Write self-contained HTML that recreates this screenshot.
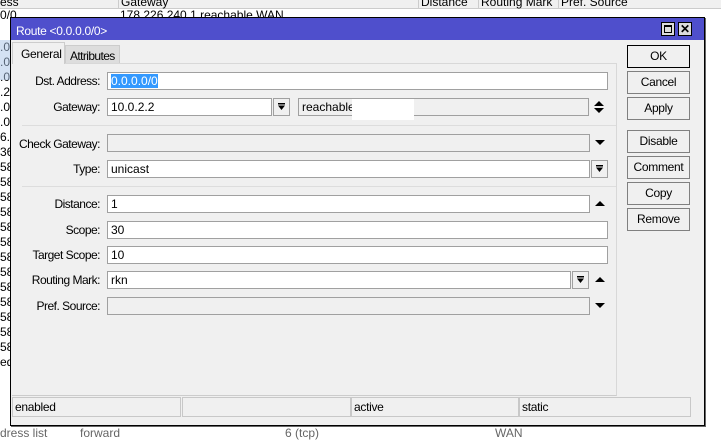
<!DOCTYPE html>
<html><head><style>
*{box-sizing:border-box;margin:0;padding:0}
body{width:721px;height:437px;overflow:hidden;background:#fff;font-family:"Liberation Sans",sans-serif;font-size:11px;color:#000;position:relative}
.a{position:absolute}
.in{position:absolute;height:18px;border:1px solid #a0a0a0;background:#fff;padding:2px 3px;font-size:12px;line-height:12px}
.g{background:#f0f0f0}
.lb{position:absolute;right:621px;font-size:12px;text-align:right;white-space:nowrap;letter-spacing:-0.5px}
.btn{position:absolute;left:627px;width:63px;height:23px;border:1px solid #808080;background:#f0f0f0;text-align:center;line-height:21px;font-size:12px;letter-spacing:-0.3px}
.dd{position:absolute;width:17px;height:18px;border:1px solid #a0a0a0;background:#f0f0f0}
.dd svg{position:absolute;left:4px;top:4px}
.tri{position:absolute}
.cell{position:absolute;top:397px;height:20px;border:1px solid #c8c8c8;font-size:12px;line-height:18px;padding-left:2px;letter-spacing:-0.3px}
</style></head><body>
<div class="a" style="left:0;top:0;width:721px;height:9px;background:#f0f0f0;border-bottom:1px solid #ccc"></div>
<div class="a" style="left:0;top:-5px;font-size:12px">ess</div>
<div class="a" style="left:118px;top:-5px;font-size:12px;border-left:1px solid #ccc;padding-left:2px">Gateway</div>
<div class="a" style="left:418px;top:-5px;font-size:12px;border-left:1px solid #ccc;padding-left:2px">Distance</div>
<div class="a" style="left:478px;top:-5px;font-size:12px;border-left:1px solid #ccc;padding-left:2px">Routing Mark</div>
<div class="a" style="left:558px;top:-5px;font-size:12px;border-left:1px solid #ccc;padding-left:2px">Pref. Source</div>
<div class="a" style="left:120px;top:8px;font-size:12px">178.226.240.1 reachable WAN</div>
<div class="a" style="left:0;top:8px;font-size:12px">0/0</div>
<div class="a" style="left:0;top:40px;width:10px;height:385px;background:#fff;font-size:12px;line-height:15px;overflow:hidden">.0<br>.0<br>.0<br>.2<br>.0<br>.0<br>6.<br>36<br>58<br>58<br>58<br>58<br>58<br>58<br>58<br>58<br>58<br>58<br>58<br>58<br>58<br>ed</div>
<div class="a" style="left:0;top:40px;width:10px;height:40px;background:#a8c4e8;opacity:.5"></div>
<div class="a" style="left:705px;top:20px;width:16px;height:405px;background:#fff;border-left:1px solid #ddd"></div>
<div class="a" style="left:0;top:427px;width:721px;height:10px;font-size:12px;color:#666;line-height:12px">
<span class="a" style="left:0">dress list</span><span class="a" style="left:80px">forward</span><span class="a" style="left:285px">6 (tcp)</span><span class="a" style="left:495px">WAN</span></div>
<div class="a" style="left:10px;top:17px;width:695px;height:409px;background:#f0f0f0;border:1px solid #000;box-shadow:1px 1px 0 #666"></div>
<div class="a" style="left:11px;top:18px;width:693px;height:22px;background:#4f4fcc"></div>
<div class="a" style="left:16px;top:24px;color:#fff;font-size:12px;letter-spacing:-0.3px">Route &lt;0.0.0.0/0&gt;</div>
<div class="a" style="left:661px;top:22px;width:14px;height:14px;background:#ddd;border:1px solid #000"><div style="margin:2px;width:8px;height:8px;border:1px solid #000;border-top-width:2px"></div></div>
<div class="a" style="left:678px;top:22px;width:14px;height:14px;background:#ddd;border:1px solid #000;font-size:12px;font-weight:bold;line-height:12px;text-align:center">✕</div>
<div class="a" style="left:12px;top:42px;width:53px;height:22px;background:#f0f0f0;border:1px solid #ccc;border-bottom:none;font-size:12px;padding:4px 0 0 8px;z-index:2;letter-spacing:-0.3px">General</div>
<div class="a" style="left:65px;top:45px;width:55px;height:19px;background:#ddd;border:1px solid #ccc;font-size:12px;padding:3px 0 0 4px;letter-spacing:-0.6px">Attributes</div>
<div class="a" style="left:12px;top:63px;width:605px;height:333px;border:1px solid #d8d8d8;border-left:none;border-bottom:1px solid #ccc"></div>
<div class="lb" style="top:74px">Dst. Address:</div>
<div class="in" style="left:107px;top:72px;width:501px"><span style="background:#3399ff;color:#fff">0.0.0.0/0</span></div>
<div class="lb" style="top:100px">Gateway:</div>
<div class="in" style="left:107px;top:98px;width:165px">10.0.2.2</div>
<div class="dd" style="left:273px;top:98px"><svg width="7" height="8"><rect x="0" y="0" width="7" height="1.5"/><path d="M0 2.5H7L3.5 7Z"/></svg></div>
<div class="in g" style="left:298px;top:98px;width:291px">reachable</div>
<div class="a" style="left:352px;top:99px;width:62px;height:21px;background:#fff"></div>
<svg class="tri" style="left:594px;top:101px" width="10" height="13"><path d="M5 0L10 5H0Z M0 7H10L5 12Z"/></svg>
<div class="a" style="left:22px;top:125px;width:594px;height:1px;background:#ddd"></div>
<div class="lb" style="top:137px">Check Gateway:</div>
<div class="in g" style="left:107px;top:134px;width:483px"></div>
<svg class="tri" style="left:595px;top:140px" width="10" height="6"><path d="M0 0H10L5 5Z"/></svg>
<div class="lb" style="top:162px">Type:</div>
<div class="in" style="left:107px;top:160px;width:483px">unicast</div>
<div class="dd" style="left:591px;top:160px"><svg width="7" height="8"><rect x="0" y="0" width="7" height="1.5"/><path d="M0 2.5H7L3.5 7Z"/></svg></div>
<div class="a" style="left:22px;top:186px;width:594px;height:1px;background:#ddd"></div>
<div class="lb" style="top:197px">Distance:</div>
<div class="in" style="left:107px;top:195px;width:483px">1</div>
<svg class="tri" style="left:595px;top:201px" width="10" height="6"><path d="M5 0L10 5H0Z"/></svg>
<div class="lb" style="top:223px">Scope:</div>
<div class="in" style="left:107px;top:221px;width:501px">30</div>
<div class="lb" style="top:248px">Target Scope:</div>
<div class="in" style="left:107px;top:246px;width:501px">10</div>
<div class="lb" style="top:273px">Routing Mark:</div>
<div class="in" style="left:107px;top:271px;width:464px">rkn</div>
<div class="dd" style="left:572px;top:271px"><svg width="7" height="8"><rect x="0" y="0" width="7" height="1.5"/><path d="M0 2.5H7L3.5 7Z"/></svg></div>
<svg class="tri" style="left:595px;top:277px" width="10" height="6"><path d="M5 0L10 5H0Z"/></svg>
<div class="lb" style="top:299px">Pref. Source:</div>
<div class="in g" style="left:107px;top:297px;width:483px"></div>
<svg class="tri" style="left:595px;top:303px" width="10" height="6"><path d="M0 0H10L5 5Z"/></svg>
<div class="btn" style="top:45px;border:1px solid #000">OK</div>
<div class="btn" style="top:71px">Cancel</div>
<div class="btn" style="top:97px">Apply</div>
<div class="btn" style="top:130px">Disable</div>
<div class="btn" style="top:156px">Comment</div>
<div class="btn" style="top:182px">Copy</div>
<div class="btn" style="top:208px">Remove</div>
<div class="cell" style="left:12px;width:169px">enabled</div>
<div class="cell" style="left:182px;width:169px"></div>
<div class="cell" style="left:351px;width:168px">active</div>
<div class="cell" style="left:519px;width:172px">static</div>
</body></html>
